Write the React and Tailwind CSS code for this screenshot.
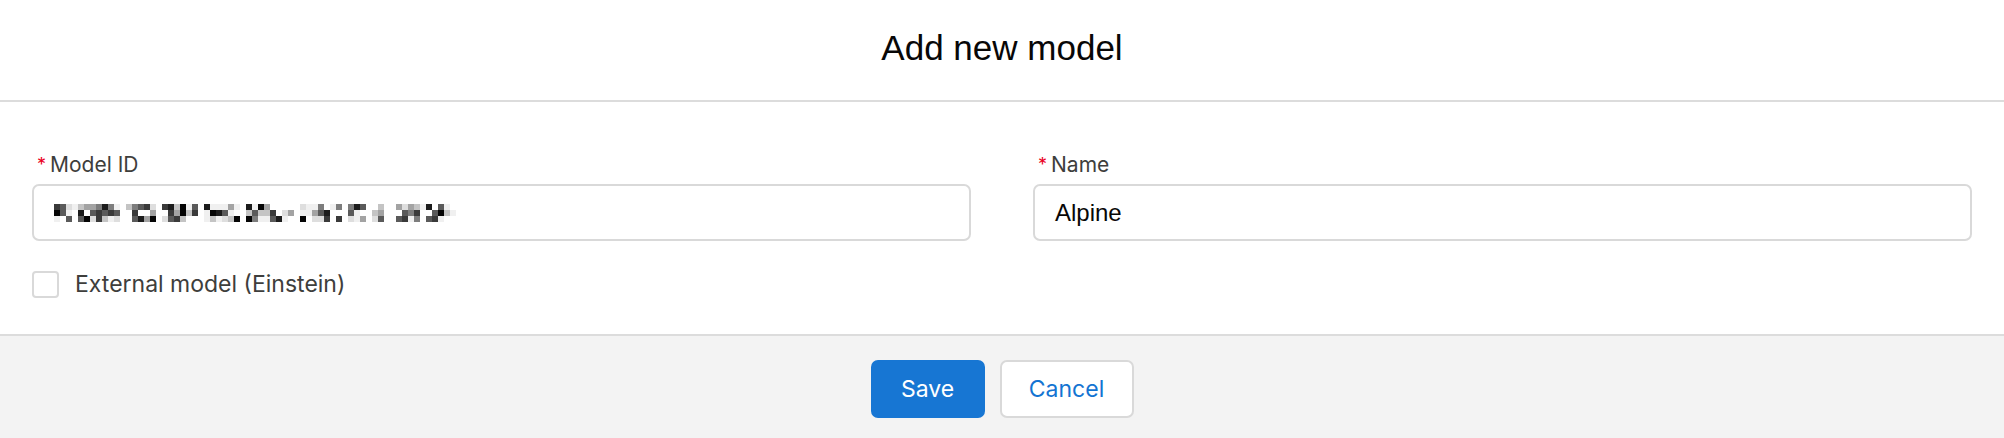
import React from "react";

const sans = { fontFamily: "Inter, 'Noto Sans', sans-serif" };
const helv = { fontFamily: "'Liberation Sans', Arial, sans-serif" };

// obscured model id, drawn as a 3-row mosaic
const GREYS = ["#ffffff", "#f0f0f0", "#dedede", "#c4c4c4", "#a3a3a3", "#7d7d7d", "#5a5a5a", "#3a3a3a", "#1c1c1c", "#050505"];
const GAPS = new Set([3, 11, 17, 24, 31, 40, 46, 52, 55, 56, 61]);

function mosaic() {
  let seed = 4242;
  const rnd = () => {
    seed = (seed * 1103515245 + 12345) % 2147483648;
    return seed / 2147483648;
  };
  const cols = [];
  for (let c = 0; c < 67; c++) {
    const col = [];
    for (let r = 0; r < 3; r++) {
      if (GAPS.has(c)) {
        col.push(rnd() > 0.85 ? GREYS[1] : GREYS[0]);
      } else {
        const v = rnd();
        // about a third of the cells stay blank, the rest spread over the greys
        col.push(v < 0.3 ? GREYS[Math.floor(v * 7)] : GREYS[Math.min(9, 2 + Math.floor((v - 0.3) * 11))]);
      }
    }
    cols.push(col);
  }
  return cols;
}

const BLOCKS = mosaic();

function Label({ children }) {
  return (
    <div className="flex items-center h-[28px] mb-[5px] text-[21px] text-[#3e3e3c]" style={sans}>
      <span className="text-[#ea001e] text-[18px] mr-[4px] ml-[5px] leading-none">*</span>
      {children}
    </div>
  );
}

function Field({ label, children }) {
  return (
    <div className="flex flex-col">
      <Label>{label}</Label>
      <div className="h-[57px] border-2 border-[#d9d9d9] rounded-[7px] bg-white flex items-center pl-[20px]">
        {children}
      </div>
    </div>
  );
}

export default function App() {
  return (
    <div className="w-[2004px] h-[438px] bg-white flex flex-col overflow-hidden">
      {/* Header */}
      <div className="h-[102px] border-b-2 border-[#dcdcdc] flex items-center justify-center">
        <h2 className="text-[35px] text-[#080707] pb-[4px]" style={helv}>
          Add new model
        </h2>
      </div>

      {/* Body */}
      <div className="h-[232px] px-[32px] pt-[49px]">
        <div className="grid grid-cols-2 gap-[62px]">
          <div>
            <Field label="Model ID">
              <div className="flex">
                {BLOCKS.map((col, i) => (
                  <div key={i} className="flex flex-col">
                    {col.map((c, j) => (
                      <span key={j} className="block w-[6px] h-[6px]" style={{ backgroundColor: c }} />
                    ))}
                  </div>
                ))}
              </div>
            </Field>
            <label className="flex items-center mt-[26px] cursor-pointer">
              <span className="w-[27px] h-[27px] border-2 border-[#d9d9d9] rounded-[4px] bg-white" />
              <span className="ml-[16px] text-[23px] text-[#3e3e3c]" style={sans}>
                External model (Einstein)
              </span>
            </label>
          </div>
          <div>
            <Field label="Name">
              <span className="text-[24px] text-[#080707]" style={helv}>
                Alpine
              </span>
            </Field>
          </div>
        </div>
      </div>

      {/* Footer */}
      <div className="flex-1 bg-[#f3f3f3] border-t-2 border-[#dcdcdc] flex justify-center items-start pt-[24px] gap-[15px]">
        <button
          className="w-[114px] h-[58px] rounded-[7px] bg-[#1776d3] text-white text-[23px]"
          style={sans}
        >
          Save
        </button>
        <button
          className="w-[134px] h-[58px] rounded-[7px] bg-white border-2 border-[#d9d9d9] text-[#1374d2] text-[23px]"
          style={sans}
        >
          Cancel
        </button>
      </div>
    </div>
  );
}
